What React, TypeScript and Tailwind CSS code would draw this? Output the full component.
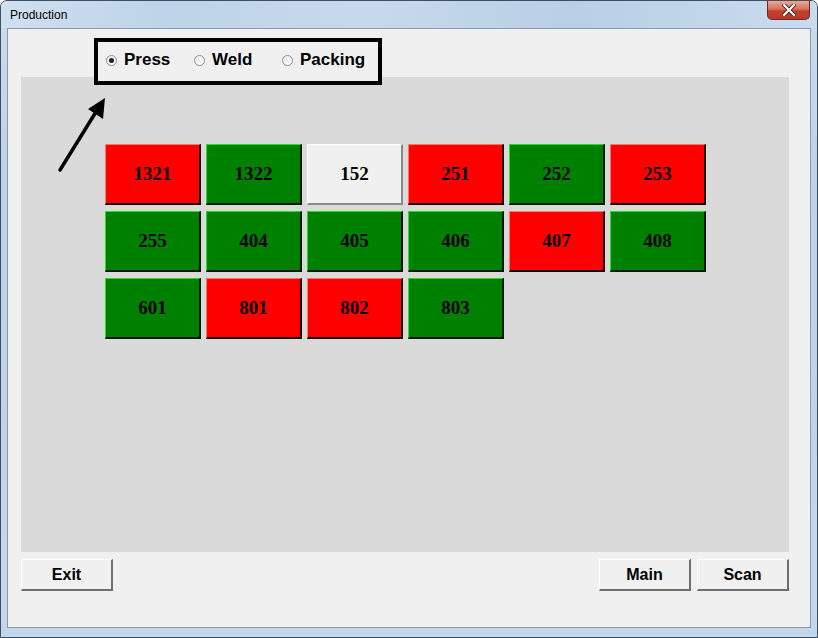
import React from "react";

type Tile = { label: string; color: "red" | "green" | "white" };

const tiles: Tile[] = [
  { label: "1321", color: "red" },
  { label: "1322", color: "green" },
  { label: "152", color: "white" },
  { label: "251", color: "red" },
  { label: "252", color: "green" },
  { label: "253", color: "red" },
  { label: "255", color: "green" },
  { label: "404", color: "green" },
  { label: "405", color: "green" },
  { label: "406", color: "green" },
  { label: "407", color: "red" },
  { label: "408", color: "green" },
  { label: "601", color: "green" },
  { label: "801", color: "red" },
  { label: "802", color: "red" },
  { label: "803", color: "green" },
];

const tileClass: Record<Tile["color"], string> = {
  red: "bg-[#ff0000] border-t-[#ff7a6a] border-l-[#ff7a6a] border-b-[#1a0000] border-r-[#1a0000]",
  green: "bg-[#008000] border-t-[#22e022] border-l-[#22e022] border-b-[#001a00] border-r-[#001a00]",
  white: "bg-[#f0f0f0] border-t-[#ffffff] border-l-[#ffffff] border-b-[#8a8a8a] border-r-[#8a8a8a]",
};

function Radio({ checked }: { checked?: boolean }) {
  return (
    <span className="w-[11px] h-[11px] rounded-full border border-[#8e8f8f] bg-[linear-gradient(135deg,#e6e6e6,#ffffff)] flex items-center justify-center shrink-0">
      {checked && <span className="w-[5px] h-[5px] rounded-full bg-[#222]" />}
    </span>
  );
}

function WinButton({ label }: { label: string }) {
  return (
    <div className="w-[92px] h-[32px] bg-[#f0f0f0] border-t border-l border-t-[#ffffff] border-l-[#ffffff] border-b-2 border-r-2 border-b-[#6e6e6e] border-r-[#6e6e6e] flex items-center justify-center text-[16px] font-bold text-black [font-family:'Liberation_Sans',Arial,sans-serif]">
      {label}
    </div>
  );
}

export default function App() {
  return (
    <div className="relative w-[818px] h-[638px] overflow-hidden border border-[#3f4d5c] rounded-t-[7px] bg-[linear-gradient(180deg,#c9dcef_0%,#bcd2ea_30%,#c3d7ec_100%)] [font-family:'Liberation_Sans',Arial,sans-serif]">
      {/* title bar */}
      <div className="h-[27px] flex items-center pl-[9px] bg-[linear-gradient(90deg,#cfe0f1_0%,#bed3e9_20%,#c7d9ec_45%,#b9cfe6_70%,#c9dbee_100%)]">
        <span className="text-[12px] text-black pt-[1px]">Production</span>
      </div>
      {/* close button */}
      <div className="absolute top-[0px] right-[7px] w-[43px] h-[19px] rounded-b-[5px] border border-[#6b2a20] border-t-0 bg-[linear-gradient(180deg,#e9a898_0%,#d7705c_45%,#c4402a_55%,#b8382a_100%)] flex items-center justify-center">
        <svg width="14" height="12" viewBox="0 0 14 12">
          <path d="M2 1 L12 11 M12 1 L2 11" stroke="#4a2018" strokeWidth="4" strokeLinecap="square" />
          <path d="M2 1 L12 11 M12 1 L2 11" stroke="#ffffff" strokeWidth="2.2" strokeLinecap="square" />
        </svg>
      </div>

      {/* client area */}
      <div className="relative mx-[6px] h-[600px] border border-[#8b9aab] bg-[#f0f0f0]">
        <div className="ml-[13px] mt-[48px] w-[768px] h-[475px] bg-[#dadada] pl-[84px] pt-[67px]">
          <div className="grid grid-cols-[repeat(6,96px)] gap-x-[5px] gap-y-[6px]">
            {tiles.map((t) => (
              <div
                key={t.label}
                className={`h-[61px] border-t border-l border-b-2 border-r-2 flex items-center justify-center text-[19px] font-bold text-black [font-family:'Liberation_Serif','Times_New_Roman',serif] ${tileClass[t.color]}`}
              >
                {t.label}
              </div>
            ))}
          </div>
        </div>
        <div className="mt-[7px] flex justify-between pl-[13px] pr-[21px]">
          <WinButton label="Exit" />
          <div className="flex gap-[6px]">
            <WinButton label="Main" />
            <WinButton label="Scan" />
          </div>
        </div>

        {/* radio box annotation */}
        <div className="absolute left-[86px] top-[9px] w-[288px] h-[47px] border-4 border-black bg-[#f0f0f0] flex items-center pl-[8px] pb-[3px] text-[17px] font-bold text-black">
          <div className="w-[88px] flex items-center gap-[7px]">
            <Radio checked />
            <span>Press</span>
          </div>
          <div className="w-[88px] flex items-center gap-[7px]">
            <Radio />
            <span>Weld</span>
          </div>
          <div className="flex items-center gap-[7px]">
            <Radio />
            <span>Packing</span>
          </div>
        </div>
      </div>

      {/* arrow annotation */}
      <svg className="absolute left-0 top-0" width="818" height="638" viewBox="0 0 818 638">
        <line x1="59" y1="169" x2="98" y2="106" stroke="#000" strokeWidth="3.5" strokeLinecap="round" />
        <polygon points="104,97 87,108 102,118" fill="#000" />
      </svg>
    </div>
  );
}
